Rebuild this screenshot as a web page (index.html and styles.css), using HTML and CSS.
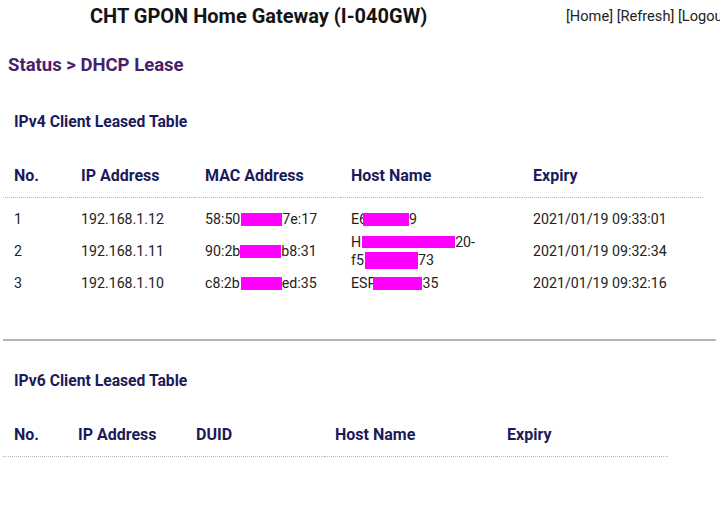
FILE: index.html
```
<!DOCTYPE html>
<html>
<head>
<meta charset="utf-8">
<link rel="stylesheet" href="styles.css">
</head>
<body>
<div class="topbar">
  <div class="title">CHT GPON Home Gateway (I-040GW)</div>
  <div class="links">[Home] [Refresh] [Logout]</div>
</div>
<div class="crumb">Status &gt; DHCP Lease</div>

<div class="section-title first">IPv4 Client Leased Table</div>
<table class="lease v4">
  <colgroup><col class="c1"><col class="c2"><col class="c3"><col class="c4"><col class="c5"></colgroup>
  <thead>
    <tr><th>No.</th><th>IP Address</th><th>MAC Address</th><th>Host Name</th><th>Expiry</th></tr>
  </thead>
  <tbody>
    <tr><td>1</td><td>192.168.1.12</td><td>58:50<span class="redact m1"></span>7e:17</td><td>E6<span class="redact h1"></span>9</td><td>2021/01/19 09:33:01</td></tr>
    <tr><td>2</td><td>192.168.1.11</td><td>90:2b<span class="redact m2"></span>b8:31</td><td class="wrap"><span class="twoline">H<span class="redact h2a"></span>20-<br>f5<span class="redact h2b"></span>73</span></td><td>2021/01/19 09:32:34</td></tr>
    <tr><td>3</td><td>192.168.1.10</td><td>c8:2b<span class="redact m3"></span>ed:35</td><td>ESP<span class="redact h3"></span>35</td><td>2021/01/19 09:32:16</td></tr>
  </tbody>
</table>

<div class="divider"></div>

<div class="section-title">IPv6 Client Leased Table</div>
<table class="lease v6">
  <colgroup><col class="d1"><col class="d2"><col class="d3"><col class="d4"><col class="d5"></colgroup>
  <thead>
    <tr><th>No.</th><th>IP Address</th><th>DUID</th><th>Host Name</th><th>Expiry</th></tr>
  </thead>
</table>
</body>
</html>
```
FILE: styles.css
```
html, body {
  margin: 0;
  padding: 0;
  overflow: hidden;
  background: #ffffff;
}
body {
  width: 720px;
  font-family: Roboto, "Liberation Sans", Arial, sans-serif;
  color: #222222;
}
.topbar {
  display: grid;
  grid-template-columns: 566px 154px;
  height: 32px;
  align-items: center;
}
.title {
  padding-left: 90px;
  font-size: 20px;
  font-weight: bold;
  color: #141414;
  line-height: 32px;
  white-space: nowrap;
}
.links {
  font-size: 14.6px;
  line-height: 30px;
  white-space: nowrap;
  overflow: hidden;
  color: #222222;
}
.crumb {
  margin-top: 21px;
  padding-left: 8px;
  font-size: 18.5px;
  line-height: 24px;
  font-weight: bold;
  color: #4a1d6d;
}
.section-title {
  margin-top: 30px;
  padding-left: 14px;
  font-size: 15.7px;
  line-height: 20px;
  font-weight: bold;
  color: #1b1b5b;
}
.section-title.first {
  margin-top: 35px;
}
.lease {
  margin-top: 34px;
  margin-left: 3px;
  border-collapse: collapse;
  table-layout: fixed;
}
.lease.v4 { width: 700px; }
.lease.v6 { width: 665px; }
.c1 { width: 67px; }
.c2 { width: 124px; }
.c3 { width: 146px; }
.c4 { width: 182px; }
.c5 { width: 181px; }
.d1 { width: 64px; }
.d2 { width: 118px; }
.d3 { width: 139px; }
.d4 { width: 172px; }
.d5 { width: 172px; }
.lease th {
  text-align: left;
  font-size: 16px;
  line-height: 20px;
  font-weight: bold;
  color: #1b1b5b;
  padding: 0 0 11px 11px;
  border-bottom: 1px dotted #b8b8b8;
  white-space: nowrap;
}
.lease td {
  font-size: 14.2px;
  line-height: 16px;
  height: 16px;
  padding: 8px 0 8px 11px;
  vertical-align: middle;
  white-space: nowrap;
  color: #222222;
}
.lease tbody tr:first-child td {
  padding-top: 13px;
}
.lease td.wrap {
  padding-top: 0;
  padding-bottom: 0;
  height: 32px;
}
.twoline {
  display: block;
  line-height: 18px;
  margin: -2px 0;
}
.redact {
  display: inline-block;
  background: #ff00ff;
  height: 13px;
  vertical-align: -2px;
}
.m1 { width: 41px; margin-left: 1px; }
.m2 { width: 41px; }
.m3 { width: 41px; margin-left: 1px; }
.h1 { width: 46px; margin-left: -4px; }
.h2a { width: 93px; margin-left: 1px; height: 12px; vertical-align: -1px; }
.h2b { width: 53px; height: 17px; vertical-align: -4px; margin-left: 1px; }
.h3 { width: 49px; margin-left: -3px; }
.divider {
  margin-top: 40px;
  margin-left: 3px;
  width: 713px;
  border-top: 2px solid #b4b4b4;
}
```
